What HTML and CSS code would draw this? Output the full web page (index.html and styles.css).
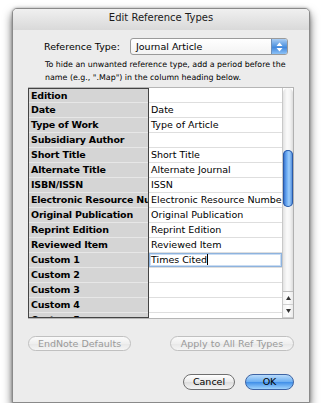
FILE: index.html
```html
<!DOCTYPE html>
<html>
<head>
<meta charset="utf-8">
<link rel="stylesheet" href="styles.css">
</head>
<body>
<div class="window">
  <div class="titlebar">Edit Reference Types</div>
  <div class="content">
    <div class="typerow">
      <span class="typelabel">Reference Type:</span>
      <div class="popup">
        <span class="popup-text">Journal Article</span>
        <span class="popup-arrows">
          <svg width="7" height="10" viewBox="0 0 7 10"><path d="M3.5 0.5 L6.5 4 L0.5 4 Z M0.5 6 L6.5 6 L3.5 9.5 Z" fill="#fff"/></svg>
        </span>
      </div>
    </div>
    <div class="info">To hide an unwanted reference type, add a period before the<br>name (e.g., ".Map") in the column heading below.</div>
    <div class="table">
      <div class="rows">
        <div class="row"><div class="k">Edition</div><div class="v"></div></div>
        <div class="row"><div class="k">Date</div><div class="v">Date</div></div>
        <div class="row"><div class="k">Type of Work</div><div class="v">Type of Article</div></div>
        <div class="row"><div class="k">Subsidiary Author</div><div class="v"></div></div>
        <div class="row"><div class="k">Short Title</div><div class="v">Short Title</div></div>
        <div class="row"><div class="k">Alternate Title</div><div class="v">Alternate Journal</div></div>
        <div class="row"><div class="k">ISBN/ISSN</div><div class="v">ISSN</div></div>
        <div class="row"><div class="k">Electronic Resource Nu</div><div class="v">Electronic Resource Numbe</div></div>
        <div class="row"><div class="k">Original Publication</div><div class="v">Original Publication</div></div>
        <div class="row"><div class="k">Reprint Edition</div><div class="v">Reprint Edition</div></div>
        <div class="row"><div class="k">Reviewed Item</div><div class="v">Reviewed Item</div></div>
        <div class="row"><div class="k">Custom 1</div><div class="v focus">Times Cited<span class="caret"></span></div></div>
        <div class="row"><div class="k">Custom 2</div><div class="v"></div></div>
        <div class="row"><div class="k">Custom 3</div><div class="v"></div></div>
        <div class="row"><div class="k">Custom 4</div><div class="v"></div></div>
        <div class="row"><div class="k">Custom 5</div><div class="v"></div></div>
      </div>
      <div class="scrollbar">
        <div class="track">
          <div class="thumb"></div>
        </div>
        <div class="arrow"><svg width="5" height="4" viewBox="0 0 5 4"><path d="M2.5 0 L5 4 L0 4 Z" fill="#333"/></svg></div>
        <div class="arrow"><svg width="5" height="4" viewBox="0 0 5 4"><path d="M0 0 L5 0 L2.5 4 Z" fill="#333"/></svg></div>
      </div>
    </div>
    <div class="btnrow1">
      <div class="btn disabled w1">EndNote Defaults</div>
      <div class="btn disabled w2">Apply to All Ref Types</div>
    </div>
    <div class="btnrow2">
      <div class="btn cancel">Cancel</div>
      <div class="btn ok">OK</div>
    </div>
  </div>
</div>
</body>
</html>
```

FILE: styles.css
```css
html, body {
  margin: 0;
  padding: 0;
  background: #ffffff;
}
body {
  font-family: "DejaVu Sans", sans-serif;
  color: #000;
  padding: 8px 0 0 12px;
}
.window {
  width: 298px;
  height: 395px;
  background: #ececec;
  border: 1px solid #8a8a8a;
  border-radius: 5px 5px 0 0;
  box-sizing: border-box;
  box-shadow: 0 5px 10px rgba(0,0,0,0.6), 0 0 3px rgba(0,0,0,0.3);
  overflow: hidden;
}
.titlebar {
  height: 21px;
  box-sizing: border-box;
  padding-top: 3px;
  text-align: center;
  font-size: 10px;
  line-height: 12px;
  color: #1a1a1a;
  background: linear-gradient(#f0f0f0, #d9d9d9);
}
.content {
  display: flex;
  flex-direction: column;
}
.typerow {
  display: flex;
  align-items: center;
  margin-top: 8px;
  height: 17px;
  padding-left: 31px;
}
.typelabel {
  font-size: 9.5px;
  width: 86px;
}
.popup {
  width: 158px;
  height: 17px;
  box-sizing: border-box;
  border: 1px solid #9a9a9a;
  border-radius: 3px;
  background: linear-gradient(#ffffff, #f3f3f3);
  display: flex;
  align-items: center;
  justify-content: space-between;
  overflow: hidden;
}
.popup-text {
  font-size: 9.5px;
  padding-left: 5px;
}
.popup-arrows {
  width: 15px;
  height: 15px;
  background: linear-gradient(#a9cdf4, #4f93e0 50%, #3b82da 51%, #8cc2f7);
  border-left: 1px solid #6d8fb8;
  display: flex;
  align-items: center;
  justify-content: center;
}
.info {
  margin-top: 3px;
  padding-left: 32px;
  font-size: 7.9px;
  line-height: 13px;
  white-space: nowrap;
}
.table {
  margin-top: 3px;
  margin-left: 15px;
  width: 266px;
  height: 232px;
  display: flex;
  overflow: hidden;
  border-top: 1px solid #b5b5b5;
  border-bottom: 1px solid #b5b5b5;
  box-sizing: border-box;
  background: #fff;
}
.rows {
  width: 254px;
  overflow: hidden;
  position: relative;
}
.rows::before {
  content: "";
  position: absolute;
  left: 0;
  top: 0;
  bottom: 0;
  width: 119px;
  border-left: 1px solid #444;
  border-right: 1px solid #444;
  border-bottom: 1px solid #444;
  box-sizing: content-box;
  pointer-events: none;
}
.row {
  display: flex;
  height: 15px;
}
.k {
  width: 119px;
  margin-left: 1px;
  margin-right: 1px;
  background: #d5d5d5;
  border-bottom: 1px solid #e7e7e7;
  box-sizing: border-box;
  font-weight: bold;
  font-size: 9.5px;
  letter-spacing: -0.2px;
  line-height: 14px;
  padding-left: 2px;
  white-space: nowrap;
  overflow: hidden;
}
.row:first-child .k {
  border-top: 1px solid #444;
}
.v {
  flex: 1;
  border-bottom: 1px solid #dedede;
  box-sizing: border-box;
  font-size: 9.5px;
  line-height: 14px;
  padding-left: 2px;
  white-space: nowrap;
  overflow: hidden;
  position: relative;
}
.v.focus {
  box-shadow: inset 0 0 0 1px #8eb3de, inset 0 0 0 2px #c9dcf2;
}
.caret {
  display: inline-block;
  width: 1px;
  height: 11px;
  background: #000;
  vertical-align: -2px;
}
.scrollbar {
  width: 12px;
  border-left: 1px solid #c8c8c8;
  border-right: 1px solid #b0b0b0;
  box-sizing: border-box;
  display: flex;
  flex-direction: column;
  background: #fff;
}
.track {
  flex: 1;
  position: relative;
  background: linear-gradient(90deg, #e2e2e2, #fafafa 40%, #f4f4f4 70%, #dcdcdc);
  border-radius: 5px 5px 0 0;
  border-bottom: 1px solid #bdbdbd;
}
.thumb {
  position: absolute;
  left: 0;
  right: 0;
  top: 62px;
  height: 57px;
  border-radius: 5px;
  background: linear-gradient(90deg, #2b5fb8, #5fa0ef 30%, #9fcffc 60%, #3f7dd4);
  box-shadow: inset 0 0 0 1px #2a5aa8;
}
.arrow {
  height: 12px;
  display: flex;
  align-items: center;
  justify-content: center;
  border-bottom: 1px solid #d0d0d0;
  background: linear-gradient(90deg, #f2f2f2, #ffffff, #eaeaea);
}
.btnrow1 {
  display: flex;
  justify-content: space-between;
  margin-top: 17px;
  padding: 0 15px;
}
.btnrow2 {
  display: flex;
  justify-content: flex-end;
  gap: 10px;
  margin-top: 23px;
  padding-right: 15px;
}
.btn {
  height: 15px;
  box-sizing: border-box;
  border-radius: 8px;
  border: 1px solid #9c9c9c;
  background: linear-gradient(#ffffff, #e9e9e9 50%, #dcdcdc 51%, #f4f4f4);
  font-size: 9.5px;
  line-height: 13px;
  text-align: center;
}
.btn.disabled {
  color: #9a9a9a;
  border-color: #c0c0c0;
  background: linear-gradient(#fafafa, #efefef 50%, #e7e7e7 51%, #f5f5f5);
}
.w1 { width: 103px; }
.w2 { width: 124px; }
.cancel {
  width: 52px;
  height: 16px;
  line-height: 14px;
  border-color: #6f6f6f;
}
.ok {
  width: 49px;
  height: 16px;
  line-height: 14px;
  border-color: #3d63a3;
  background: linear-gradient(#b9dbfb, #6aaef2 50%, #3f8ee8 51%, #9fd3fd);
}
```
